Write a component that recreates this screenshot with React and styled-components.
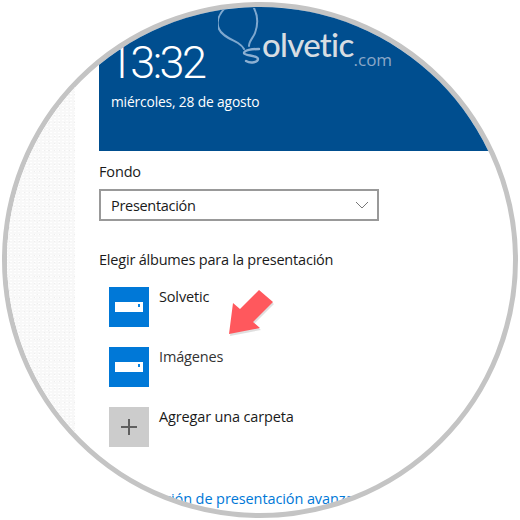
import React from 'react'
import styled, { createGlobalStyle } from 'styled-components'

const GlobalStyle = createGlobalStyle`
  html, body {
    margin: 0;
    background: #fff;
    overflow: hidden;
  }
  body {
    font-family: "Open Sans", "Noto Sans", sans-serif;
  }
`

const Lens = styled.div`
  position: relative;
  box-sizing: border-box;
  width: 516px;
  height: 516px;
  margin: 2px;
  border: 5px solid #c4c4c4;
  border-radius: 50%;
  overflow: hidden;
  display: flex;
  background: #fff;
`

const Sidebar = styled.div`
  flex: 0 0 68px;
  background-color: #f8f8f8;
  background-image:
    radial-gradient(circle, #eeeeee 0.7px, transparent 1px),
    radial-gradient(circle, #ffffff 0.8px, transparent 1.1px),
    radial-gradient(circle, #efefef 0.7px, transparent 1px);
  background-size: 5px 7px, 4px 3px, 11px 9px;
  background-position: 0 0, 2px 1px, 3px 4px;
`

const Main = styled.div`
  flex: 1;
  min-width: 0;
  padding-left: 24px;
  display: flex;
  flex-direction: column;
  color: #1a1a1a;
  font-size: 14.5px;
  letter-spacing: -0.15px;
`

const Banner = styled.div`
  position: relative;
  flex: 0 0 144px;
  box-sizing: border-box;
  padding: 32px 0 0 12px;
  background: #004e8f;
  color: #fff;
`

const Time = styled.div`
  font-family: "Roboto", "Open Sans", sans-serif;
  font-size: 45px;
  font-weight: 300;
  line-height: 48px;
  letter-spacing: -2.6px;
  margin-left: -3px;
`

const DateLine = styled.div`
  font-size: 13.8px;
  line-height: 18px;
  margin-top: 6px;
  letter-spacing: -0.15px;
`

const Logo = styled.div`
  position: absolute;
  left: 119px;
  top: 1px;
  display: flex;
  align-items: flex-end;
  height: 64px;
`

const LogoMark = styled.svg`
  align-self: flex-start;
  width: 44px;
  height: 60px;
  flex: none;
`

const LogoWord = styled.span`
  font-family: "Lato", "Open Sans", sans-serif;
  font-size: 33px;
  font-weight: 500;
  line-height: 36px;
  letter-spacing: -0.7px;
  color: #d7dde2;
  margin-bottom: 10px;
`

const LogoTld = styled.span`
  font-size: 17px;
  line-height: 16px;
  letter-spacing: 0;
  color: #8ba8c8;
  margin-bottom: 4px;
`

const FieldLabel = styled.div`
  line-height: 20px;
  margin-top: 11px;
`

const Select = styled.div`
  box-sizing: border-box;
  width: 280px;
  height: 32px;
  margin-top: 7px;
  padding: 0 10px;
  border: 2px solid #999;
  letter-spacing: -0.3px;
  display: flex;
  align-items: center;
  justify-content: space-between;
`

const Chevron = styled.svg`
  width: 14px;
  height: 8px;
  margin-right: -2px;
  flex: none;
`

const SectionTitle = styled.div`
  line-height: 20px;
  margin-top: 29px;
  letter-spacing: -0.2px;
`

const AlbumList = styled.div`
  display: flex;
  flex-direction: column;
  gap: 20px;
  margin: 17px 0 0 10px;
`

const AlbumRow = styled.div`
  display: flex;
  gap: 10px;
`

const Tile = styled.div`
  flex: none;
  width: 40px;
  height: 40px;
  display: flex;
  align-items: center;
  justify-content: center;
  background: ${({ $add }) => ($add ? '#cccccc' : '#0078d7')};
`

const DriveBar = styled.div`
  position: relative;
  width: 28px;
  height: 10px;
  background: #fff;
  &::after {
    content: "";
    position: absolute;
    right: 3px;
    top: 2px;
    width: 2px;
    height: 3px;
    background: #0a84e0;
  }
`

const AlbumName = styled.div`
  line-height: 20px;
  color: ${({ $muted }) => ($muted ? '#333' : '#1a1a1a')};
`

const AdvancedLink = styled.a`
  display: block;
  margin-top: 42px;
  line-height: 20px;
  letter-spacing: -0.1px;
  white-space: nowrap;
  color: #0078d7;
`

const Arrow = styled.svg`
  position: absolute;
  left: 208px;
  top: 271px;
  width: 70px;
  height: 65px;
`

const albums = ['Solvetic', 'Imágenes']

export default function App() {
  return (
    <>
      <GlobalStyle />
      <Lens>
        <Sidebar />
        <Main>
          <Banner>
            <Time>13:32</Time>
            <DateLine>miércoles, 28 de agosto</DateLine>
            <Logo>
              <LogoMark viewBox="0 0 44 60" fill="none" strokeLinecap="round">
                <path
                  d="M7 0C1 6 -2 14 1 21C4 28 13 31 20 35C23 37 25 39 26 41M36 0C40 8 40 17 37 25C35 30 31 33 31 38"
                  stroke="#7ea8cf"
                  strokeWidth="2"
                />
                <path
                  d="M41 41C34 41 26 42 26 45C26 48 40 47 40 51C40 54 33 56 28 53"
                  stroke="#8db0d2"
                  strokeWidth="2.4"
                />
              </LogoMark>
              <LogoWord>olvetic</LogoWord>
              <LogoTld>.com</LogoTld>
            </Logo>
          </Banner>
          <FieldLabel>Fondo</FieldLabel>
          <Select>
            Presentación
            <Chevron viewBox="0 0 14 8" fill="none">
              <path d="M1 1L7 7L13 1" stroke="#777" strokeWidth="1" />
            </Chevron>
          </Select>
          <SectionTitle>Elegir álbumes para la presentación</SectionTitle>
          <AlbumList>
            {albums.map((name, i) => (
              <AlbumRow key={name}>
                <Tile>
                  <DriveBar />
                </Tile>
                <AlbumName $muted={i === 1}>{name}</AlbumName>
              </AlbumRow>
            ))}
            <AlbumRow>
              <Tile $add>
                <svg width="16" height="16" viewBox="0 0 16 16">
                  <path d="M8 0V16M0 8H16" stroke="#5f5f5f" strokeWidth="2" />
                </svg>
              </Tile>
              <AlbumName>Agregar una carpeta</AlbumName>
            </AlbumRow>
          </AlbumList>
          <AdvancedLink>Configuración de presentación avanzada</AdvancedLink>
        </Main>
        <Arrow viewBox="0 0 70 65">
          <polygon
            points="14,56 18,25 25,31 44,12 58,24 38,44 45,50"
            fill="#b9b9b9"
            opacity="0.45"
            transform="translate(1 2)"
          />
          <polygon points="14,56 18,25 25,31 44,12 58,24 38,44 45,50" fill="#ff585d" />
        </Arrow>
      </Lens>
    </>
  )
}
